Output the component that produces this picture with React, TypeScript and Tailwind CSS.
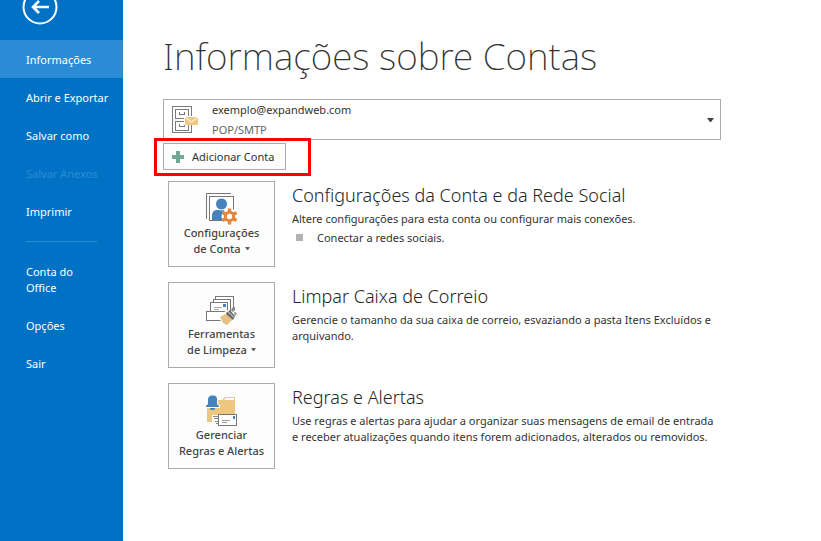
import type { ReactNode } from "react";
import classNames from "clsx";

type MenuItem = { label: string; active?: boolean; disabled?: boolean };

const topItems: MenuItem[] = [
  { label: "Informações", active: true },
  { label: "Abrir e Exportar" },
  { label: "Salvar como" },
  { label: "Salvar Anexos", disabled: true },
  { label: "Imprimir" },
];

const bottomItems: MenuItem[] = [
  { label: "Conta do Office" },
  { label: "Opções" },
  { label: "Sair" },
];

function BackIcon() {
  return (
    <svg width="36" height="36" viewBox="0 0 36 36" fill="none" stroke="#fff">
      <circle cx="18" cy="18" r="16.5" strokeWidth="2" />
      <path d="M27 18H11M17 12l-6 6 6 6" strokeWidth="2.6" />
    </svg>
  );
}

function CabinetIcon() {
  return (
    <svg width="28" height="30" viewBox="0 0 28 30" fill="none" stroke="#7a7a7a" shapeRendering="crispEdges">
      <rect x="1.5" y="1.5" width="19" height="26" />
      <rect x="4.5" y="4.5" width="13" height="9" />
      <rect x="4.5" y="16.5" width="13" height="9" />
      <path d="M8.5 7v2.5h5V7M8.5 19v2.5h5V19" />
      <path d="M13 11h15v9H13z" fill="#fff" stroke="none" />
      <path d="M14 12h13v8H14z" fill="#f0c880" stroke="none" />
      <path d="M14 12l6.5 5 6.5-5" stroke="#fff" shapeRendering="auto" />
    </svg>
  );
}

function AccountIcon() {
  return (
    <svg width="32" height="32" viewBox="0 0 32 32" fill="none">
      <path d="M.5 26V.5H25" stroke="#777" />
      <rect x="3.5" y="3.5" width="24" height="24" fill="#fff" stroke="#777" />
      <path d="M6 27v-4c0-4 2-6 5-6h7c3 0 5 2 5 5v5z" fill="#4682bd" />
      <circle cx="15.5" cy="11" r="6" fill="#4682bd" stroke="#fff" />
      <g transform="translate(23.5 23.5)">
        <circle r="8" fill="#fff" />
        <path d="M0-8V8M-7-4L7 4M-7 4L7-4" stroke="#e2873c" strokeWidth="3.5" />
        <circle r="4.2" fill="#fff" stroke="#e2873c" strokeWidth="3" />
      </g>
    </svg>
  );
}

function CleanupIcon() {
  return (
    <svg width="32" height="32" viewBox="0 0 32 32" fill="none">
      <g stroke="#777" fill="#fff" shapeRendering="crispEdges">
        <path d="M9.5 5V2.5h18v13" />
        <path d="M7.5 8V5.5h17v11" />
        <path d="M4.5 18V8.5h17v9" />
        <path d="M8 13.5h8M8 15.5h5" stroke="#aaa" />
        <path d="M4 17.5H.5v9h21v-9H4" />
      </g>
      <path d="M17 10h3v3h-3z" fill="#4682bd" />
      <path d="M12 23l9-7 9 8-5 7h-7z" fill="#fcfcfc" />
      <path d="M14 23l7-4 6 6-6 6c-1 0-1-1-3-1.5s-1-3-4-6.5z" fill="#e9c083" />
      <path d="M20 19l4-3 5 6-2 4-6-5z" fill="#6d6d6d" />
      <path d="M25 16l2-3h2v3l-2 2zM28 18l3 1-2 3z" fill="#888" />
      <path d="M21.5 17l6 6" stroke="#fff" strokeWidth=".8" />
    </svg>
  );
}

function RulesIcon() {
  return (
    <svg width="32" height="32" viewBox="0 0 32 32" fill="none">
      <path d="M1 27V5h15l3-3h10v25z" fill="#eec77f" />
      <path d="M18 5l2-2h8v2z" fill="#fff" />
      <path d="M0 11l2-2V4c0-2 2-3 3-3.5h3c2 .5 3 1.5 3 3.5v5l2 2v1H0z" fill="#4682bd" stroke="#fcfcfc" strokeWidth="2" paintOrder="stroke" />
      <path d="M4 13h5v1c-1 1.5-4 1.5-5 0z" fill="#4682bd" />
      <path d="M6 20h8v11H6z" fill="#fcfcfc" />
      <path d="M7 21.5h5M8 23.5h4M9 26.5h3M10 28.5h2" stroke="#888" />
      <rect x="12.5" y="19.5" width="18" height="11" fill="#fff" stroke="#777" />
      <path d="M27 21h2v3h-2z" fill="#4682bd" />
      <path d="M16 25.5h8M16 27.5h5" stroke="#999" />
    </svg>
  );
}

function Caret() {
  return (
    <svg className="mb-1 ml-1 inline-block" width="5" height="3" viewBox="0 0 5 3">
      <path d="M0 0h5L3 3H2z" fill="#666" />
    </svg>
  );
}

function MenuButton({ item }: { item: MenuItem }) {
  return (
    <li>
      <button
        type="button"
        disabled={item.disabled}
        className={classNames("w-full pt-3 pr-3 pb-[10px] pl-[26px] text-left", {
          "bg-[#2b8cd5]": item.active,
          "text-[#2b8cd5]": item.disabled,
        })}
      >
        {item.label}
      </button>
    </li>
  );
}

type SectionProps = {
  icon: ReactNode;
  lines: [string, string];
  hasMenu?: boolean;
  title: string;
  children: ReactNode;
};

function Section({ icon, lines, hasMenu, title, children }: SectionProps) {
  return (
    <section className="flex gap-[17px]">
      <button
        type="button"
        className="flex h-[86px] w-[107px] shrink-0 flex-col items-center border border-[#ababab] bg-[#fdfdfd] pt-[11px] font-medium text-[#444]"
      >
        {icon}
        <span className="whitespace-nowrap">
          {lines[0]}
          <br />
          {lines[1]}
          {hasMenu && <Caret />}
        </span>
      </button>
      <div className="min-w-0">
        <h2 className="pb-[2px] text-[18px] leading-7 font-light text-[#262626]">{title}</h2>
        {children}
      </div>
    </section>
  );
}

function App() {
  return (
    <div className="flex min-h-screen bg-white font-['Noto_Sans','Segoe_UI',sans-serif] text-[11px] leading-4 text-[#333]">
      <nav className="w-[123px] shrink-0 bg-[#0072c6] text-white">
        <div className="h-10 overflow-hidden pl-[22px]">
          <button type="button" aria-label="Voltar" className="-mt-[11px] block">
            <BackIcon />
          </button>
        </div>
        <ul>
          {topItems.map((item) => <MenuButton key={item.label} item={item} />)}
        </ul>
        <hr className="mx-[26px] mt-[11px] mb-[10px] border-[#2b8cd5]" />
        <ul className="pr-4">
          {bottomItems.map((item) => <MenuButton key={item.label} item={item} />)}
        </ul>
      </nav>

      <main className="min-w-0 flex-1 pt-8 pr-[100px] pb-8 pl-10">
        <h1 className="text-[37px] leading-[48px] font-extralight whitespace-nowrap">Informações sobre Contas</h1>

        <div className="mt-[19px] flex h-[41px] items-center border border-[#ababab] pr-[6px] pl-[7px]">
          <CabinetIcon />
          <div className="ml-[13px] flex-1">
            <select aria-label="Conta" className="block h-5 w-full appearance-none bg-transparent">
              <option>exemplo@expandweb.com</option>
            </select>
            <p className="leading-5 text-[#666]">POP/SMTP</p>
          </div>
          <svg width="7" height="4" viewBox="0 0 7 4">
            <path d="M0 0h7L4 4H3z" fill="#444" />
          </svg>
        </div>

        <div className="relative mt-[3px] w-fit">
          <button type="button" className="flex h-[27px] items-center gap-2 border border-[#ababab] bg-[#fdfdfd] pr-[11px] pl-[7px]">
            <svg width="13" height="13" viewBox="0 0 13 13">
              <path d="M5 1h4v4h4v4H9v4H5V9H1V5h4z" fill="#71a893" />
            </svg>
            Adicionar Conta
          </button>
          {/* highlight around the add button */}
          <div className="pointer-events-none absolute -top-[5px] -right-[25px] -bottom-[6px] -left-[9px] border-3 border-[#ff0000]" />
        </div>

        <div className="mt-[11px] flex flex-col gap-[15px] pl-[5px]">
          <Section icon={<AccountIcon />} lines={["Configurações", "de Conta"]} hasMenu title="Configurações da Conta e da Rede Social">
            <p>Altere configurações para esta conta ou configurar mais conexões.</p>
            <ul className="mt-[3px]">
              <li className="flex pl-1">
                <span className="mt-1 mr-[14px] size-[7px] bg-[#b1b1b1]" />
                Conectar a redes sociais.
              </li>
            </ul>
          </Section>
          <Section icon={<CleanupIcon />} lines={["Ferramentas", "de Limpeza"]} hasMenu title="Limpar Caixa de Correio">
            <p>Gerencie o tamanho da sua caixa de correio, esvaziando a pasta Itens Excluídos e arquivando.</p>
          </Section>
          <Section icon={<RulesIcon />} lines={["Gerenciar", "Regras e Alertas"]} title="Regras e Alertas">
            <p>Use regras e alertas para ajudar a organizar suas mensagens de email de entrada e receber atualizações quando itens forem adicionados, alterados ou removidos.</p>
          </Section>
        </div>
      </main>
    </div>
  );
}

export default App;
